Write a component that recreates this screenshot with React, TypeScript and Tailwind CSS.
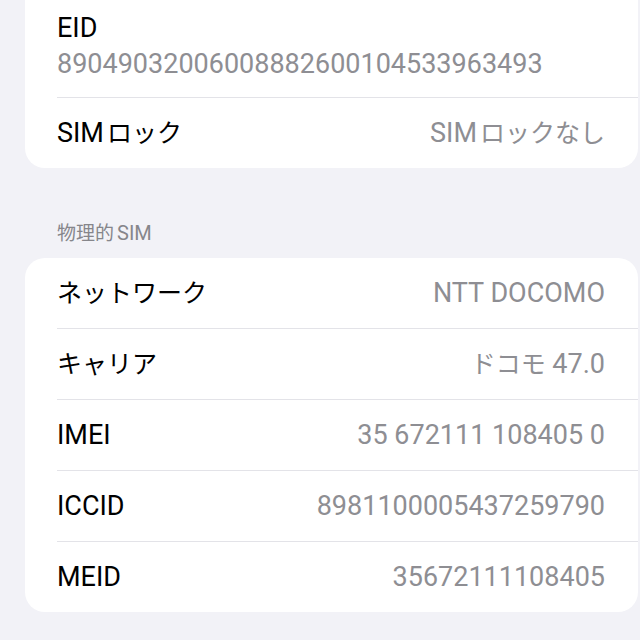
import type { ReactNode } from "react";

// Japanese glyphs run a touch smaller than the Latin text beside them
function J({ children, gap }: { children: ReactNode; gap?: boolean }) {
  return <span className={gap ? "ml-[3px] text-[25px]" : "text-[25px]"}>{children}</span>;
}

function Row({ label, value, last }: { label: ReactNode; value: ReactNode; last?: boolean }) {
  return (
    <div className="pl-8">
      <div className="flex h-[70px] items-center justify-between pr-[33px]">
        <span className="text-black">{label}</span>
        <span className="text-[#8e8e93] tabular-nums">{value}</span>
      </div>
      {!last && <div className="h-px bg-[#e3e3e8]" />}
    </div>
  );
}

export default function App() {
  return (
    <div
      className="min-h-[640px] bg-[#f2f2f7] pl-[25px] pr-[2px] text-[27px] leading-8"
      style={{ fontFamily: 'Roboto, "Noto Sans CJK JP", sans-serif' }}
    >
      {/* card continues above the visible area */}
      <div className="rounded-b-[20px] bg-white">
        <div className="pl-8">
          <div className="pt-3 pb-[17px]">
            <div className="text-black">EID</div>
            <div className="mt-1 text-[#8e8e93] tabular-nums">89049032006008882600104533963493</div>
          </div>
          <div className="h-px bg-[#e3e3e8]" />
        </div>
        <Row
          label={<>SIM<J gap>ロック</J></>}
          value={<>SIM<J gap>ロックなし</J></>}
          last
        />
      </div>

      <div className="pl-8 pt-[53px] pb-3 text-[20px] leading-6 text-[#86868b]">
        <span className="mr-[3px] text-[19px]">物理的</span>SIM
      </div>

      <div className="rounded-[20px] bg-white">
        <Row label={<J>ネットワーク</J>} value="NTT DOCOMO" />
        <Row label={<J>キャリア</J>} value={<><J>ドコモ</J> 47.0</>} />
        <Row label="IMEI" value="35 672111 108405 0" />
        <Row label="ICCID" value="8981100005437259790" />
        <Row label="MEID" value="35672111108405" last />
      </div>
    </div>
  );
}
